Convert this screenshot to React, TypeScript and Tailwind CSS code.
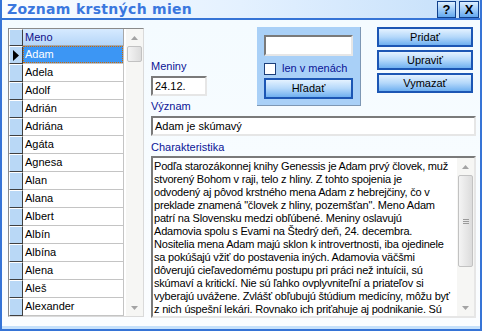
const names = [
  "Adam",
  "Adela",
  "Adolf",
  "Adrián",
  "Adriána",
  "Agáta",
  "Agnesa",
  "Alan",
  "Alana",
  "Albert",
  "Albín",
  "Albína",
  "Alena",
  "Aleš",
  "Alexander",
];

const memo = [
  "Podľa starozákonnej knihy Genessis je Adam prvý človek, muž",
  "stvorený Bohom v raji, telo z hliny. Z tohto spojenia je",
  "odvodený aj pôvod krstného mena Adam z hebrejčiny, čo v",
  "preklade znamená \"človek z hliny, pozemšťan\". Meno Adam",
  "patrí na Slovensku medzi obľúbené. Meniny oslavujú",
  "Adamovia spolu s Evami na Štedrý deň, 24. decembra.",
  "Nositelia mena Adam majú sklon k introvertnosti, iba ojedinele",
  "sa pokúšajú vžiť do postavenia iných. Adamovia väčšmi",
  "dôverujú cieľavedomému postupu pri práci než intuícii, sú",
  "skúmaví a kritickí. Nie sú ľahko ovplyvniteľní a priateľov si",
  "vyberajú uvážene. Zvlášť obľubujú štúdium medicíny, môžu byť",
  "z nich úspešní lekári. Rovnako ich priťahuje aj podnikanie. Sú",
];

function Arrow({ up }: { up?: boolean }) {
  return (
    <svg width="7" height="4" viewBox="0 0 7 4">
      <path d={up ? "M0 4 L3.5 0 L7 4 Z" : "M0 0 L3.5 4 L7 0 Z"} fill="#a3a3a3" />
    </svg>
  );
}

function BlueButton({ label, className = "" }: { label: string; className?: string }) {
  return (
    <div
      className={
        "flex items-center justify-center border-2 border-[#1c56b4] bg-gradient-to-b from-[#e4f2ff] via-[#b4d8fa] to-[#6fb0f0] text-[11px] leading-none text-black " +
        className
      }
    >
      {label}
    </div>
  );
}

function Sunken({ children, className = "" }: { children?: React.ReactNode; className?: string }) {
  return (
    <div
      className={
        "border-2 border-t-[#7a7a7a] border-l-[#7a7a7a] border-r-[#e6e6e6] border-b-[#e6e6e6] bg-white " +
        className
      }
    >
      {children}
    </div>
  );
}

function NameGrid() {
  return (
    <div className="w-[136px] h-[289px] flex border border-t-[#8a8a8a] border-l-[#8a8a8a] border-r-[#dadada] border-b-[#dadada] bg-white">
      <div className="w-[14px] flex flex-col">
        <div className="h-[17px] bg-[#b9d8f6] border border-t-white border-l-white border-r-[#404040] border-b-[#404040]" />
        {names.map((n, i) => (
          <div
            key={n}
            className="h-[18px] bg-[#b9d8f6] border border-t-white border-l-white border-r-[#404040] border-b-[#404040] flex items-center justify-center"
          >
            {i === 0 && (
              <svg width="6" height="11" viewBox="0 0 6 11">
                <path d="M0 0 L6 5.5 L0 11 Z" fill="#000" />
              </svg>
            )}
          </div>
        ))}
      </div>
      <div className="w-[101px] flex flex-col">
        <div className="h-[17px] bg-gradient-to-b from-[#d6eaff] to-[#b6d6f8] border-b border-r border-[#a8a8a8] pl-[2px] flex items-center text-[#10108a]">
          Meno
        </div>
        {names.map((n, i) => (
          <div key={n} className="h-[18px] border-b border-r border-[#c4c4c4] flex">
            {i === 0 ? (
              <div className="flex-1 flex items-center pl-[1px] bg-[#3c96f4] text-white border border-dotted border-[#d06a00]">
                {n}
              </div>
            ) : (
              <div className="flex-1 flex items-center pl-[2px]">{n}</div>
            )}
          </div>
        ))}
      </div>
      <div className="w-[2px]" />
      <div className="flex-1 flex flex-col bg-[#f6f6f4]">
        <div className="h-[17px] flex items-center justify-center">
          <Arrow up />
        </div>
        <div className="h-[16px] mx-[1px] rounded-[2px] border border-[#c2c2c2] bg-gradient-to-r from-[#f4f4f4] to-[#dcdcdc]" />
        <div className="flex-1" />
        <div className="h-[17px] flex items-center justify-center">
          <Arrow />
        </div>
      </div>
    </div>
  );
}

export default function App() {
  return (
    <div className="w-[482px] h-[331px] flex flex-col border-x-2 border-b-2 border-[#3674d6] bg-[#f4faff] text-[11px] leading-[13px] text-black [font-family:'Liberation_Sans',Arial,sans-serif]">
      <div className="h-[20px] shrink-0 flex items-center justify-between border-b-2 border-[#3674d6] bg-gradient-to-r from-[#fbfdff] via-[#e4f1ff] to-[#c4dffa] pl-[5px] pr-[1px]">
        <span className="text-[14px] font-bold tracking-[0.3px] text-[#3a77de] [font-family:'DejaVu_Sans',Verdana,sans-serif]">
          Zoznam krstných mien
        </span>
        <div className="flex gap-[3px]">
          <div className="w-[19px] h-[17px] flex items-center justify-center border border-[#10408c] bg-gradient-to-b from-[#dcefff] to-[#62a8ee] text-[13px] font-bold text-black">
            ?
          </div>
          <div className="w-[20px] h-[17px] flex items-center justify-center border border-[#10408c] bg-gradient-to-b from-[#dcefff] to-[#62a8ee] text-[13px] font-bold text-black">
            X
          </div>
        </div>
      </div>

      <div className="flex-1 flex pt-[8px] pl-[6px] bg-gradient-to-b from-[#f4fbff] to-[#fbfdff]">
        <NameGrid />

        <div className="ml-[7px] flex flex-col w-[326px]">
          <div className="flex items-start">
            <div className="w-[106px] pt-[32px] flex flex-col">
              <div className="text-[#0a1496] h-[13px]">Meniny</div>
              <Sunken className="mt-[3px] w-[56px] h-[20px] pl-[2px] flex items-center">24.12.</Sunken>
              <div className="text-[#0a1496] h-[13px] mt-[4px]">Význam</div>
            </div>
            <div className="w-[104px] h-[79px] -mt-[1px] bg-[#a9d0f7] border-r border-b border-[#7d97b4] pt-[8px] pl-[7px] flex flex-col">
              <Sunken className="w-[89px] h-[21px]" />
              <div className="mt-[6px] flex items-center h-[13px]">
                <div className="w-[12px] h-[12px] bg-white border border-[#1c3f7a]" />
                <span className="ml-[6px] text-[#0a1496]">len v menách</span>
              </div>
              <BlueButton label="Hľadať" className="mt-[3px] w-[89px] h-[21px]" />
            </div>
            <div className="ml-[16px] -mt-[1px] flex flex-col gap-[3px]">
              <BlueButton label="Pridať" className="w-[96px] h-[20px]" />
              <BlueButton label="Upraviť" className="w-[96px] h-[20px]" />
              <BlueButton label="Vymazať" className="w-[96px] h-[20px]" />
            </div>
          </div>

          <Sunken className="mt-[3px] w-[325px] h-[20px] pl-[2px] flex items-center">Adam je skúmavý</Sunken>
          <div className="mt-[5px] h-[13px] text-[#0a1496]">Charakteristika</div>
          <Sunken className="mt-[2px] w-[325px] h-[162px] flex">
            <div className="flex-1 pl-[1px] pt-[2px] overflow-hidden whitespace-nowrap tracking-[-0.2px]">
              {memo.map((l, i) => (
                <div key={i} className="h-[13px]">
                  {l}
                </div>
              ))}
            </div>
            <div className="w-[17px] flex flex-col bg-[#f6f6f4]">
              <div className="h-[17px] flex items-center justify-center">
                <Arrow up />
              </div>
              <div className="h-[92px] mx-[1px] rounded-[2px] border border-[#c2c2c2] bg-gradient-to-r from-[#f4f4f4] to-[#dcdcdc] flex flex-col items-center justify-center gap-[1px]">
                <div className="w-[6px] h-px bg-[#9a9a9a]" />
                <div className="w-[6px] h-px bg-[#9a9a9a]" />
                <div className="w-[6px] h-px bg-[#9a9a9a]" />
              </div>
              <div className="flex-1" />
              <div className="h-[17px] flex items-center justify-center">
                <Arrow />
              </div>
            </div>
          </Sunken>
        </div>
      </div>
      <div className="h-[3px] shrink-0 bg-[#c6e1fb]" />
    </div>
  );
}
